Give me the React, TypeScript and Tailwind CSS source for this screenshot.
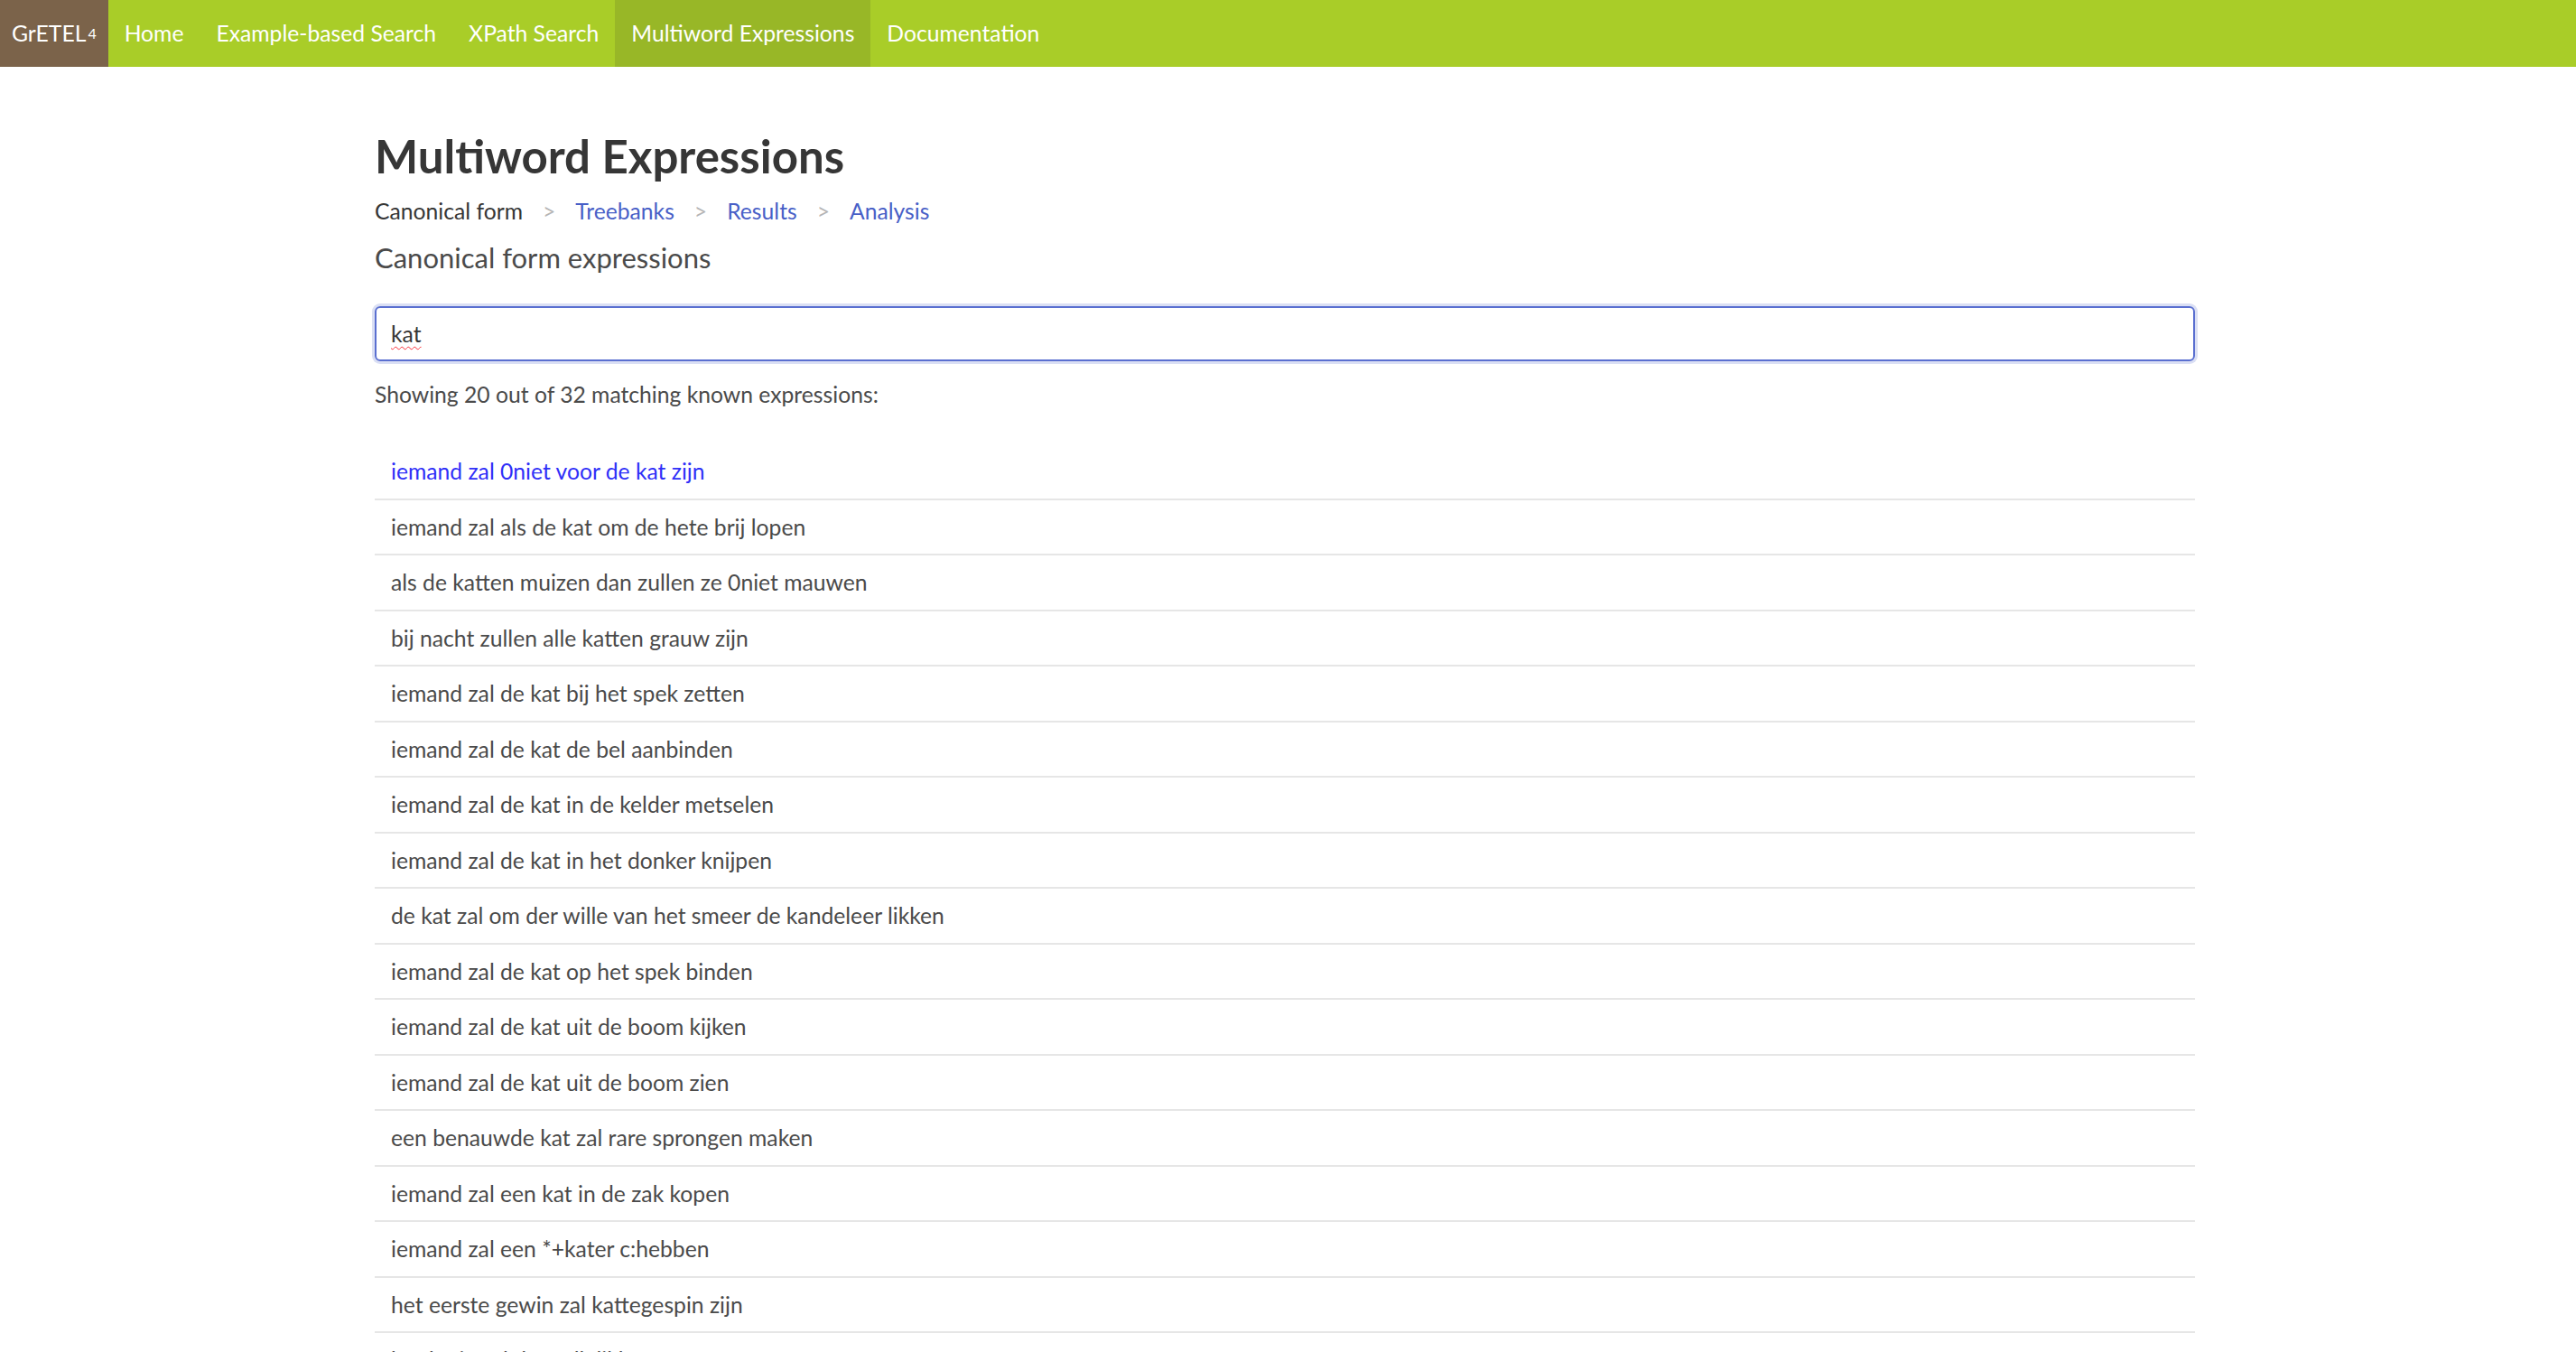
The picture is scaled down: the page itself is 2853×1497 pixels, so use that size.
import React from "react";

const navItems = [
  { label: "Home", active: false },
  { label: "Example-based Search", active: false },
  { label: "XPath Search", active: false },
  { label: "Multiword Expressions", active: true },
  { label: "Documentation", active: false },
];

const crumbs = [
  { label: "Canonical form", link: false },
  { label: "Treebanks", link: true },
  { label: "Results", link: true },
  { label: "Analysis", link: true },
];

const expressions = [
  "iemand zal 0niet voor de kat zijn",
  "iemand zal als de kat om de hete brij lopen",
  "als de katten muizen dan zullen ze 0niet mauwen",
  "bij nacht zullen alle katten grauw zijn",
  "iemand zal de kat bij het spek zetten",
  "iemand zal de kat de bel aanbinden",
  "iemand zal de kat in de kelder metselen",
  "iemand zal de kat in het donker knijpen",
  "de kat zal om der wille van het smeer de kandeleer likken",
  "iemand zal de kat op het spek binden",
  "iemand zal de kat uit de boom kijken",
  "iemand zal de kat uit de boom zien",
  "een benauwde kat zal rare sprongen maken",
  "iemand zal een kat in de zak kopen",
  "iemand zal een *+kater c:hebben",
  "het eerste gewin zal kattegespin zijn",
  "het katje zal de melk likken",
  "iemand zal de kat uit de boom laten kijken",
  "iemand zal zijn kat sturen",
  "als de kat van huis is dansen de muizen",
];

export default function App() {
  return (
    <div className="h-[1497px] overflow-hidden bg-white font-['Lato',sans-serif] text-[24.7px] text-[#4a4a4a]">
      {/* top navigation */}
      <nav className="flex h-[74px] items-stretch bg-[#a9cd28] text-white">
        <a className="flex items-center bg-[#7b634a] px-[13px]">
          GrETEL<span className="ml-[2px] text-[16px]">4</span>
        </a>
        {navItems.map((item) => (
          <a
            key={item.label}
            className={
              "flex items-center px-[18px] " +
              (item.active ? "bg-[#98b727]" : "")
            }
          >
            {item.label}
          </a>
        ))}
      </nav>

      <section className="ml-[415px] w-[2016px] pt-[72px]">
        <h1 className="text-[51px] font-bold leading-[54px] text-[#363636]">
          Multiword Expressions
        </h1>

        <div className="mt-[16px] flex items-center leading-[36px]">
          {crumbs.map((c, i) => (
            <React.Fragment key={c.label}>
              {i > 0 && <span className="px-[22px] text-[#b5b5b5]">&gt;</span>}
              <span className={c.link ? "text-[#485fc7]" : "text-[#363636]"}>
                {c.label}
              </span>
            </React.Fragment>
          ))}
        </div>

        <h2 className="mt-[13px] text-[31px] leading-[40px] text-[#4a4a4a]">
          Canonical form expressions
        </h2>

        <div className="mt-[34px] flex h-[61px] items-center rounded-[6px] border-2 border-[#5a6fd0] px-[16px] text-[#363636] shadow-[0_0_0_3px_rgba(72,95,199,0.2)]">
          <span className="underline decoration-red-500 decoration-wavy decoration-1 underline-offset-4">
            kat
          </span>
        </div>

        <p className="mt-[19px] leading-[36px]">
          Showing 20 out of 32 matching known expressions:
        </p>

        <ul className="mt-[37px]">
          {expressions.map((e, i) => (
            <li
              key={i}
              className={
                "border-b-2 border-[#e6e6e6] px-[18px] py-[12px] leading-[35.5px] " +
                (i === 0 ? "text-[#2f2ff8]" : "")
              }
            >
              {e}
            </li>
          ))}
        </ul>
      </section>
    </div>
  );
}
